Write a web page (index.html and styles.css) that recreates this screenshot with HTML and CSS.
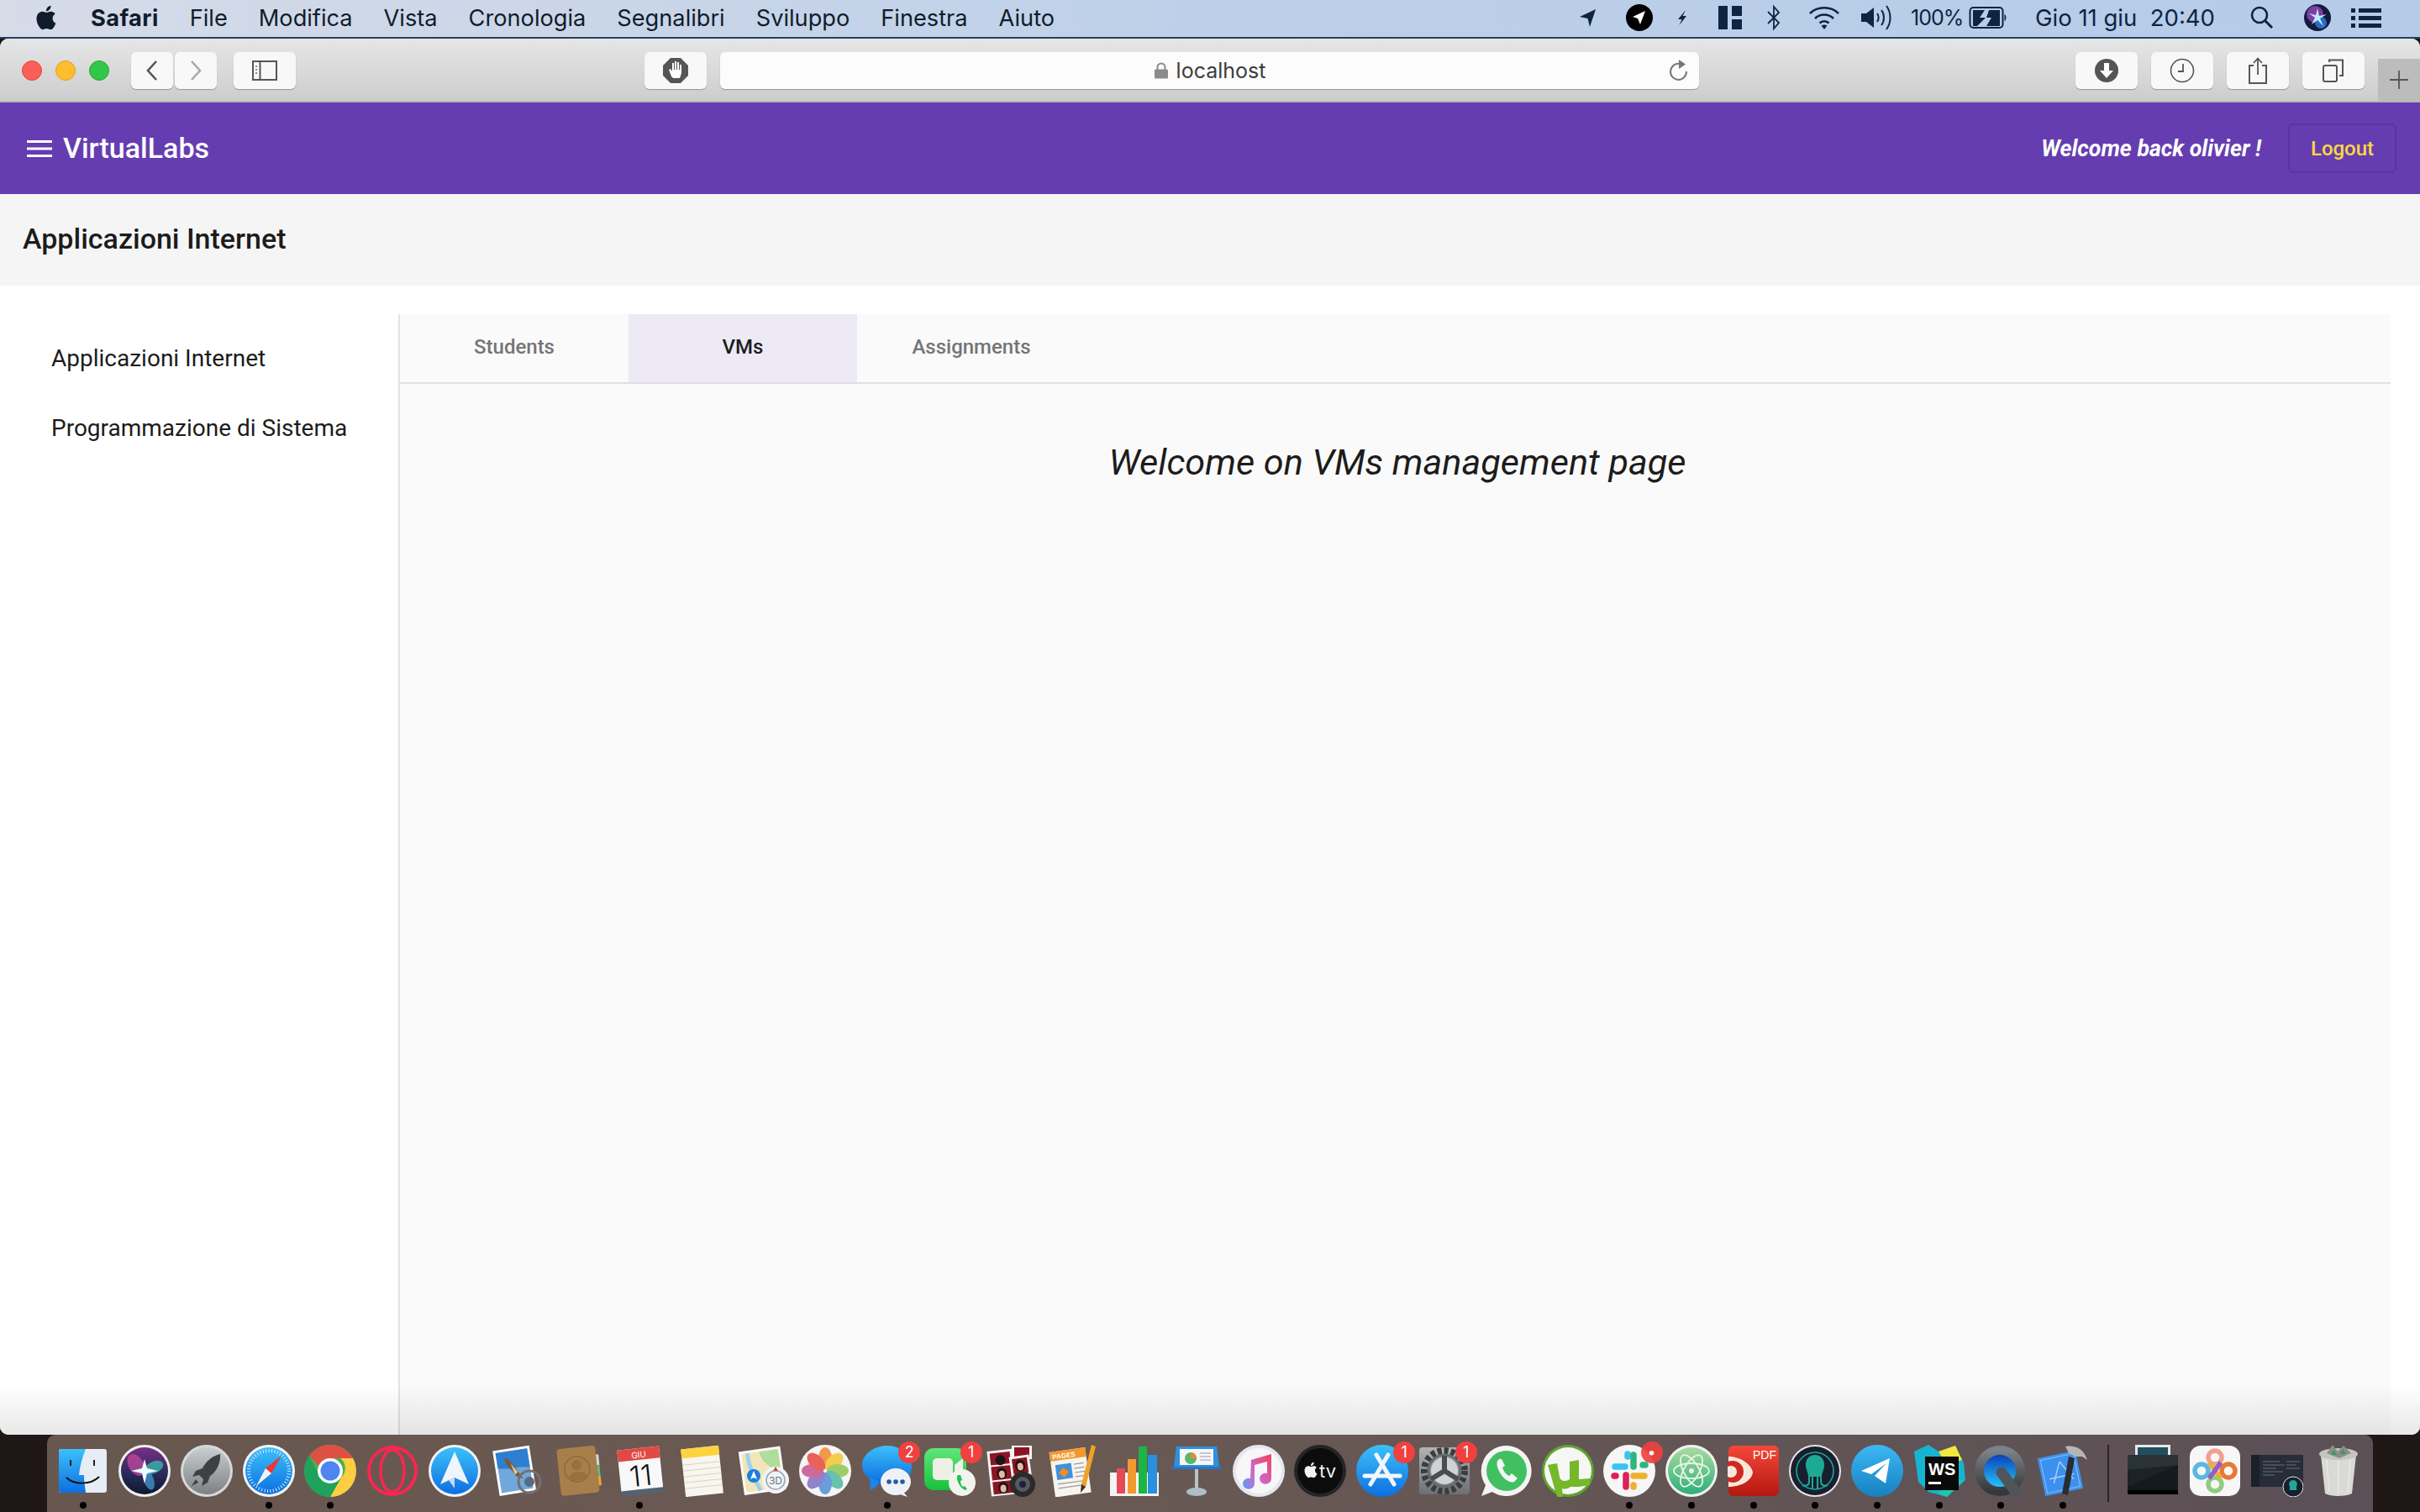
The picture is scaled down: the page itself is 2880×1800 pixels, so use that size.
FILE: index.html
```html
<!DOCTYPE html>
<html>
<head>
<meta charset="UTF-8">
<title>VirtualLabs</title>
<link rel="stylesheet" href="styles.css">
</head>
<body>
	<svg class="defs" width="0" height="0">
		<defs>
			<linearGradient id="gBlue" x1="0" y1="0" x2="0" y2="1"><stop offset="0" stop-color="#3cc0fb"/><stop offset="1" stop-color="#0d6fe0"/></linearGradient>
			<linearGradient id="gGrey" x1="0" y1="0" x2="0" y2="1"><stop offset="0" stop-color="#c9cdd0"/><stop offset="1" stop-color="#7d8184"/></linearGradient>
			<linearGradient id="gGreen" x1="0" y1="0" x2="0" y2="1"><stop offset="0" stop-color="#5fe67a"/><stop offset="1" stop-color="#17c13b"/></linearGradient>
			<linearGradient id="gSiri" x1="0" y1="0" x2="0" y2="1"><stop offset="0" stop-color="#7a2f86"/><stop offset=".55" stop-color="#2a2a5c"/><stop offset="1" stop-color="#0d1a2c"/></linearGradient>
			<linearGradient id="gNote" x1="1" y1="0" x2="0" y2="1"><stop offset="0" stop-color="#f8405f"/><stop offset=".6" stop-color="#c86ad0"/><stop offset="1" stop-color="#5aa0f0"/></linearGradient>
			<linearGradient id="gAtom" x1="0" y1="0" x2="0" y2="1"><stop offset="0" stop-color="#a8dba0"/><stop offset="1" stop-color="#2fae7c"/></linearGradient>
			<linearGradient id="gTele" x1="0" y1="0" x2="0" y2="1"><stop offset="0" stop-color="#3db8f5"/><stop offset="1" stop-color="#1680c0"/></linearGradient>
			<linearGradient id="gPdf" x1="0" y1="0" x2="0" y2="1"><stop offset="0" stop-color="#f4483a"/><stop offset="1" stop-color="#b5170f"/></linearGradient>
			<linearGradient id="gQt" x1="0" y1="0" x2="0" y2="1"><stop offset="0" stop-color="#0a3fb8"/><stop offset="1" stop-color="#28c4fa"/></linearGradient>
			<linearGradient id="gQtRing" x1="0" y1="0" x2="0" y2="1"><stop offset="0" stop-color="#7c8287"/><stop offset="1" stop-color="#34383c"/></linearGradient>
			<linearGradient id="gPrefs" x1="0" y1="0" x2="0" y2="1"><stop offset="0" stop-color="#b0b3b6"/><stop offset="1" stop-color="#6c7074"/></linearGradient>
		</defs>
	</svg>

	<div class="menubar">
		<div class="menu-left">
			<svg class="apple" viewBox="0 0 24 24"><path d="M18.71 19.5c-.83 1.24-1.71 2.45-3.05 2.47-1.34.03-1.77-.79-3.29-.79-1.53 0-2 .77-3.27.82-1.31.05-2.3-1.32-3.14-2.53C4.25 17 2.94 12.45 4.7 9.39c.87-1.52 2.43-2.48 4.12-2.51 1.28-.02 2.5.87 3.29.87.78 0 2.26-1.07 3.81-.91.65.03 2.47.26 3.64 1.98-.09.06-2.17 1.28-2.15 3.81.03 3.02 2.65 4.03 2.68 4.04-.03.07-.42 1.44-1.38 2.83M13 3.5c.73-.83 1.94-1.46 2.94-1.5.13 1.17-.34 2.35-1.04 3.19-.69.85-1.83 1.51-2.95 1.42-.15-1.15.41-2.35 1.05-3.11z"/></svg>
			<b>Safari</b>
			<span>File</span>
			<span>Modifica</span>
			<span>Vista</span>
			<span>Cronologia</span>
			<span>Segnalibri</span>
			<span>Sviluppo</span>
			<span>Finestra</span>
			<span>Aiuto</span>
		</div>
		<div class="menu-right">
			<svg class="st st-loc" viewBox="0 0 24 24"><path d="M21 2 L14 23 L11.5 13 L2 11 Z" fill="#0f2440"/></svg>
			<svg class="st st-tg" viewBox="0 0 32 32"><circle cx="16" cy="16" r="16" fill="#000"/><path d="M23 8 L8 15 L14 17 L17 24 Z" fill="#fff"/></svg>
			<svg class="st st-bolt" viewBox="0 0 16 24"><path d="M12 3 L3 14 H7.5 L4.5 21 L13 10 H8.5 Z" fill="#0f2440"/></svg>
			<svg class="st st-mag" viewBox="0 0 28 28"><path d="M0 0H11V28H0ZM16 0H28V12H16ZM16 16H28V28H16Z" fill="#0f2440"/></svg>
			<svg class="st st-bt" viewBox="0 0 20 32"><path d="M3 9 L16 22 L10 29 V3 L16 10 L3 23" fill="none" stroke="#0f2440" stroke-width="1.8"/></svg>
			<svg class="st st-wifi" viewBox="0 0 40 32"><g fill="none" stroke="#0f2440" stroke-width="2.6"><path d="M3 11 C12 2 28 2 37 11"/><path d="M9 17 C15 11 25 11 31 17"/><path d="M14.5 22.5 C17.5 19.5 22.5 19.5 25.5 22.5"/></g><path d="M20 30 L16.5 25.5 C18.5 24 21.5 24 23.5 25.5 Z" fill="#0f2440"/></svg>
			<svg class="st st-vol" viewBox="0 0 40 32"><path d="M2 11H8L17 4V28L8 21H2Z" fill="#0f2440"/><g fill="none" stroke="#0f2440" stroke-width="2"><path d="M21 11C23 14 23 18 21 21"/><path d="M26 7C30 12 30 20 26 25"/><path d="M32 2C38 10 38 22 32 30"/></g></svg>
			<span class="st-pct">100%</span>
			<svg class="st st-bat" viewBox="0 0 46 30"><rect x="1.5" y="3" width="39" height="24" rx="4" fill="none" stroke="#0f2440" stroke-width="2"/><path d="M5 6H19L13 15H20L10 25H5ZM24 6H37V25H21L27 15H21Z" fill="#0f2440"/><path d="M42.5 11C45 12 45 18 42.5 19Z" fill="#0f2440"/></svg>
			<span class="st-date">Gio 11 giu&nbsp; 20:40</span>
			<svg class="st st-search" viewBox="0 0 30 30"><circle cx="12" cy="12" r="9" fill="none" stroke="#0f2440" stroke-width="2.6"/><path d="M18.5 18.5 L27 27" stroke="#0f2440" stroke-width="3"/></svg>
			<svg class="st st-siri" viewBox="0 0 32 32"><circle cx="16" cy="16" r="16" fill="#141a3a"/><circle cx="13" cy="12" r="10" fill="#7a3fa0"/><circle cx="20" cy="22" r="7" fill="#2a6cc0"/><path d="M16 5 L18 14 L27 12 L19 17 L23 26 L16 19 L9 24 L13 16 L6 11 L14 13 Z" fill="#bfe8ff"/></svg>
			<svg class="st st-list" viewBox="0 0 36 24"><path d="M0 1H5V6H0ZM9 1H36V6H9ZM0 10H5V15H0ZM9 10H36V15H9ZM0 19H5V24H0ZM9 19H36V24H9Z" fill="#0f2440"/></svg>
		</div>
	</div>

	<div class="window">
		<div class="toolbar">
			<div class="lights">
				<i class="light red"></i>
				<i class="light yellow"></i>
				<i class="light green"></i>
			</div>
			<div class="nav-btns">
				<div class="btn btn-nav"><svg width="16" height="26" viewBox="0 0 16 26"><path d="M13 2 L3 13 L13 24" fill="none" stroke="#555" stroke-width="2.6"/></svg></div>
				<div class="btn btn-nav"><svg width="16" height="26" viewBox="0 0 16 26"><path d="M3 2 L13 13 L3 24" fill="none" stroke="#aaa" stroke-width="2.6"/></svg></div>
			</div>
			<div class="btn btn-side"><svg width="30" height="24" viewBox="0 0 30 24"><rect x="1" y="1" width="28" height="22" fill="none" stroke="#555" stroke-width="2"/><path d="M9.5 1V23" stroke="#555" stroke-width="2"/><path d="M5 6V17" stroke="#888" stroke-width="2" stroke-dasharray="2 2"/></svg></div>
			<div class="btn btn-hand"><svg width="32" height="32" viewBox="0 0 32 32"><path d="M10 1H22L31 10V22L22 31H10L1 22V10Z" fill="#555"/><path d="M11 23 L8 15 L10 14 L12 17 V7 H14 V15 H15 V5 H17 V15 H18 V6 H20 V15 H21 V9 H23 V19 L21 25 H13 Z" fill="#fff"/></svg></div>
			<div class="urlbar">
				<div class="url-text">
					<svg width="18" height="20" viewBox="0 0 18 20"><path d="M4.5 9V6a4.500 4.500 0 0 1 9 0v3" fill="none" stroke="#8b8b8b" stroke-width="2"/><rect x="1" y="8.500" width="16" height="11" rx="1.500" fill="#8b8b8b"/></svg>
					<span>localhost</span>
				</div>
				<svg class="reload" width="24" height="28" viewBox="0 0 24 28"><path d="M13 6 A9.500 9.500 0 1 0 21 15" fill="none" stroke="#777" stroke-width="2"/><path d="M12 1 L20 6.500 L12 12 Z" fill="#777"/></svg>
			</div>
			<div class="tool-right">
				<div class="btn btn-tool"><svg width="30" height="30" viewBox="0 0 30 30"><circle cx="15" cy="15" r="14" fill="#555"/><path d="M12 6H18V15H23L15 24L7 15H12Z" fill="#fff"/></svg></div>
				<div class="btn btn-tool"><svg width="30" height="30" viewBox="0 0 30 30"><circle cx="15" cy="15" r="13.500" fill="none" stroke="#555" stroke-width="1.600"/><path d="M16 7V16H10" fill="none" stroke="#555" stroke-width="1.800"/></svg></div>
				<div class="btn btn-tool"><svg width="24" height="32" viewBox="0 0 24 32"><path d="M7 10H2V31H22V10H17" fill="none" stroke="#555" stroke-width="2"/><path d="M12 21V2M7 7L12 1.500L17 7" fill="none" stroke="#555" stroke-width="1.800"/></svg></div>
				<div class="btn btn-tool"><svg width="26" height="28" viewBox="0 0 26 28"><rect x="1" y="8" width="16" height="19" rx="2" fill="none" stroke="#555" stroke-width="2"/><path d="M8 4V1.500H24V20H20" fill="none" stroke="#555" stroke-width="2"/></svg></div>
			</div>
			<div class="new-tab"><svg width="22" height="22" viewBox="0 0 22 22"><path d="M11 0V22M0 11H22" stroke="#555" stroke-width="1.800"/></svg></div>
		</div>

		<header class="appbar">
			<div class="brand">
				<svg class="hamburger" width="30" height="20" viewBox="0 0 30 20"><path d="M0 0H30V3H0ZM0 8.500H30V11.500H0ZM0 17H30V20H0Z" fill="#fff"/></svg>
				<span class="brand-name">VirtualLabs</span>
			</div>
			<div class="user-area">
				<span class="welcome">Welcome back olivier !</span>
				<button class="logout">Logout</button>
			</div>
		</header>

		<div class="subbar">Applicazioni Internet</div>

		<main class="main">
			<nav class="sidebar">
				<a class="course">Applicazioni Internet</a>
				<a class="course">Programmazione di Sistema</a>
			</nav>
			<section class="content">
				<div class="tabs">
					<div class="tab">Students</div>
					<div class="tab tab-active">VMs</div>
					<div class="tab">Assignments</div>
				</div>
				<h2 class="page-title">Welcome on VMs management page</h2>
			</section>
		</main>
	</div>

	<div class="dock-row">
		<div class="dock">
			<!-- finder -->
			<div class="item"><svg class="icon" viewBox="0 0 62 62"><rect x="2" y="5" width="57" height="52" rx="3" fill="#e6edf4"/><path d="M5 5H34C30 15 27 25 26 36H32C32 43 33 50 34 57H5A3 3 0 0 1 2 54V8A3 3 0 0 1 5 5Z" fill="url(#gBlue)"/><path d="M16 18V25M44 18V25" stroke="#222" stroke-width="2"/><path d="M11 39C20 48 40 48 50 38" fill="none" stroke="#111" stroke-width="2"/></svg><i class="dot"></i></div>
			<!-- siri -->
			<div class="item"><svg class="icon" viewBox="0 0 62 62"><circle cx="31" cy="31" r="31" fill="#eee"/><circle cx="31" cy="31" r="28" fill="url(#gSiri)"/><ellipse cx="21" cy="24" rx="9" ry="14" fill="#c04a9c" opacity=".75" transform="rotate(-30 21 24)"/><ellipse cx="42" cy="27" rx="12" ry="7" fill="#38c0b0" opacity=".75" transform="rotate(-25 42 27)"/><ellipse cx="36" cy="42" rx="6" ry="12" fill="#4aa0e0" opacity=".7" transform="rotate(-20 36 42)"/><path d="M31 17L34 28L47 31L34 34L31 46L28 34L15 31L28 28Z" fill="#eafcff"/></svg></div>
			<!-- launchpad -->
			<div class="item"><svg class="icon" viewBox="0 0 62 62"><circle cx="31" cy="31" r="31" fill="#d6d8da"/><circle cx="31" cy="31" r="28" fill="url(#gGrey)"/><path d="M47 11C38 13 30 20 26 28L18 31L14 38L22 36L27 41L25 49L32 45L35 37C43 32 48 21 47 11Z" fill="#3e4143"/><path d="M18 41L13 49L21 45Z" fill="#3e4143"/></svg></div>
			<!-- safari -->
			<div class="item"><svg class="icon" viewBox="0 0 62 62"><circle cx="31" cy="31" r="31" fill="#f4f4f4"/><circle cx="31" cy="31" r="28" fill="url(#gBlue)"/><circle cx="31" cy="31" r="24" fill="none" stroke="#d5ebff" stroke-width="4" stroke-dasharray="1 2.500"/><path d="M46 13L34 34L27 28Z" fill="#f0342c"/><path d="M16 49L27 28L34 34Z" fill="#f2f2f2"/></svg><i class="dot"></i></div>
			<!-- chrome -->
			<div class="item"><svg class="icon" viewBox="0 0 62 62"><circle cx="31" cy="31" r="31" fill="#4caf50"/><path d="M31 0A31 31 0 0 1 58 16H31A15 15 0 0 0 17 25L6 13A31 31 0 0 1 31 0Z" fill="#dd5144"/><path d="M58 16A31 31 0 0 1 31 62L44 39A15 15 0 0 0 43 16Z" fill="#ffcd40"/><path d="M31 62A31 31 0 0 1 6 13L19 39A15 15 0 0 0 44 39Z" fill="#1fa25c"/><circle cx="31" cy="31" r="15" fill="#fff"/><circle cx="31" cy="31" r="11.500" fill="#4e85f0"/></svg><i class="dot"></i></div>
			<!-- opera -->
			<div class="item"><svg class="icon" viewBox="0 0 62 62"><circle cx="31" cy="31" r="28" fill="none" stroke="#fb2650" stroke-width="4"/><ellipse cx="31" cy="31" rx="14" ry="25" fill="none" stroke="#fb2650" stroke-width="3.500"/></svg></div>
			<!-- spark -->
			<div class="item"><svg class="icon" viewBox="0 0 62 62"><circle cx="31" cy="31" r="31" fill="#f2f2f2"/><circle cx="31" cy="31" r="28" fill="url(#gBlue)"/><path d="M31 8L48 47L31 39L14 47Z" fill="#eef5fb"/><path d="M31 39V52L24 42Z" fill="#c8dcef"/></svg></div>
			<!-- mail -->
			<div class="item"><svg class="icon" viewBox="0 0 62 62"><g transform="rotate(-9 28 30)"><rect x="7" y="4" width="44" height="54" fill="#fff"/><rect x="10" y="7" width="38" height="48" fill="#6fa8dc"/><path d="M10 7H48V30C35 25 20 30 10 25Z" fill="#2f7fd0"/><path d="M20 14C25 16 27 22 30 26L38 42L30 38L26 30C22 26 19 20 20 14Z" fill="#7a5c3c"/><path d="M26 22L33 33L29 36Z" fill="#d8c4a4"/></g><circle cx="47" cy="44" r="13" fill="none" stroke="#77706c" stroke-width="3"/><circle cx="47" cy="44" r="6" fill="#5a6a80"/></svg></div>
			<!-- contacts -->
			<div class="item"><svg class="icon" viewBox="0 0 62 62"><g transform="rotate(-6 30 31)"><rect x="8" y="3" width="46" height="56" rx="4" fill="#a87e4a"/><rect x="54" y="14" width="3" height="13" fill="#d8d8d8"/><rect x="54" y="27" width="3" height="13" fill="#5fbf74"/><rect x="54" y="40" width="3" height="11" fill="#f0a830"/><circle cx="30" cy="29" r="15" fill="none" stroke="#8f6a3c" stroke-width="1.500"/><circle cx="30" cy="24" r="6" fill="#96703f"/><path d="M19 38C22 30 38 30 41 38C36 44 24 44 19 38Z" fill="#96703f"/></g></svg></div>
			<!-- calendar -->
			<div class="item"><svg class="icon" viewBox="0 0 62 62"><g transform="rotate(-6 31 31)"><rect x="7" y="5" width="50" height="55" fill="#566270"/><rect x="7" y="4" width="50" height="49" fill="#f8f8f8"/><rect x="7" y="4" width="50" height="14" fill="#e14a44"/><text x="32" y="15.500" class="cal-m">GIU</text><text x="32" y="49" class="cal-d">11</text></g></svg><i class="dot"></i></div>
			<!-- notes -->
			<div class="item"><svg class="icon" viewBox="0 0 62 62"><g transform="rotate(-6 31 31)"><rect x="9" y="3" width="45" height="57" fill="#f8f6ee"/><rect x="9" y="3" width="45" height="11" fill="#fdd33e"/><path d="M9 22H54M9 29H54M9 36H54M9 43H54M9 50H54" stroke="#d6d3c8" stroke-width="1"/></g></svg></div>
			<!-- maps -->
			<div class="item"><svg class="icon" viewBox="0 0 62 62"><g transform="rotate(-8 28 30)"><rect x="4" y="5" width="50" height="52" fill="#fafafa"/><rect x="7" y="8" width="44" height="46" fill="#f2e6b8"/><path d="M28 8H51V34C40 30 30 22 28 8Z" fill="#aedd9c"/><path d="M14 8C14 25 18 38 24 54" fill="none" stroke="#9fd0f0" stroke-width="5"/></g><circle cx="19" cy="37" r="8" fill="#1a7fe0"/><path d="M19 31L23 41L19 39L15 41Z" fill="#fff"/><circle cx="45" cy="42" r="16" fill="#f4f4f4"/><circle cx="45" cy="42" r="11" fill="none" stroke="#8fa8bc" stroke-width="1.500"/><path d="M45 26L48 31H42Z" fill="#e04030"/><text x="45" y="46.500" class="map-3d">3D</text></svg></div>
			<!-- photos -->
			<div class="item"><svg class="icon" viewBox="0 0 62 62"><circle cx="31" cy="31" r="31" fill="#f5f5f5"/><g opacity=".85"><ellipse cx="31" cy="16" rx="8" ry="13" fill="#f08a30"/><ellipse cx="31" cy="16" rx="8" ry="13" fill="#f5c530" transform="rotate(45 31 31)"/><ellipse cx="31" cy="16" rx="8" ry="13" fill="#90c850" transform="rotate(90 31 31)"/><ellipse cx="31" cy="16" rx="8" ry="13" fill="#50b8a0" transform="rotate(135 31 31)"/><ellipse cx="31" cy="16" rx="8" ry="13" fill="#5090d8" transform="rotate(180 31 31)"/><ellipse cx="31" cy="16" rx="8" ry="13" fill="#8070c0" transform="rotate(225 31 31)"/><ellipse cx="31" cy="16" rx="8" ry="13" fill="#c85090" transform="rotate(270 31 31)"/><ellipse cx="31" cy="16" rx="8" ry="13" fill="#e84840" transform="rotate(315 31 31)"/></g></svg></div>
			<!-- messages -->
			<div class="item"><svg class="icon" viewBox="0 0 62 62"><path d="M31 1C46 1 60 12 60 27C60 35 55 41 48 45H20C10 41 1 36 1 24C1 11 16 1 31 1Z" fill="url(#gBlue)"/><path d="M9 38C11 45 11 51 10 54C16 52 20 48 22 44Z" fill="#1a85ea"/><ellipse cx="41" cy="44" rx="18" ry="16" fill="#eef1f6"/><path d="M50 56L55 62L46 59Z" fill="#eef1f6"/><circle cx="33" cy="44" r="2.800" fill="#1d5ca8"/><circle cx="41" cy="44" r="2.800" fill="#1d5ca8"/><circle cx="49" cy="44" r="2.800" fill="#1d5ca8"/></svg><i class="dot"></i><b class="badge">2</b></div>
			<!-- facetime -->
			<div class="item"><svg class="icon" viewBox="0 0 62 62"><rect x="1" y="4" width="50" height="50" rx="11" fill="url(#gGreen)"/><rect x="11" y="16" width="24" height="26" rx="5" fill="#eef0e8"/><path d="M37 24L47 16V42L37 34Z" fill="#eef0e8"/><circle cx="46" cy="45" r="16" fill="#f2f3ef"/><path d="M41 36C39 38 40 43 43 48C46 53 50 55 52 53L49 49L47 50C45 48 44 46 44 43L46 42L44 36Z" fill="#22c04a"/></svg><b class="badge">1</b></div>
			<!-- photo booth -->
			<div class="item"><svg class="icon" viewBox="0 0 62 62"><g transform="rotate(-6 22 32)"><rect x="5" y="6" width="30" height="54" fill="#f5f5f5"/><rect x="8" y="9" width="24" height="14" fill="#8c1525"/><rect x="8" y="25" width="24" height="16" fill="#8c1525"/><rect x="8" y="43" width="24" height="15" fill="#8c1525"/><ellipse cx="20" cy="18" rx="6" ry="6" fill="#1e1414"/><ellipse cx="20" cy="34" rx="6" ry="7" fill="#1e1414"/><ellipse cx="20" cy="51" rx="6" ry="7" fill="#1e1414"/><ellipse cx="20" cy="35" rx="3.500" ry="4.500" fill="#e8b8a0"/><ellipse cx="20" cy="52" rx="3.500" ry="4.500" fill="#e8b8a0"/></g><rect x="32" y="1" width="24" height="16" fill="#f5f5f5"/><rect x="35" y="3" width="18" height="12" fill="#8c1525"/><g transform="rotate(-8 42 24)"><rect x="30" y="13" width="24" height="24" fill="#f5f5f5"/><rect x="33" y="16" width="18" height="18" fill="#8c1525"/><ellipse cx="42" cy="25" rx="6" ry="7" fill="#1e1414"/><ellipse cx="42" cy="26" rx="3.500" ry="4.500" fill="#e8b8a0"/></g><circle cx="45" cy="47" r="15" fill="#2a2a2c"/><circle cx="45" cy="47" r="9" fill="#555a60"/><circle cx="45" cy="47" r="4" fill="#20203c"/></svg></div>
			<!-- pages -->
			<div class="item"><svg class="icon" viewBox="0 0 62 62"><g transform="rotate(-8 26 32)"><rect x="6" y="6" width="43" height="54" fill="#f6f4ee"/><path d="M6 6H49V17H6Z" fill="#f5972c"/><text x="9" y="15" class="pages-t">PAGES</text><rect x="11" y="22" width="19" height="18" fill="#3f92d8"/><path d="M20 26L26 32L20 38L14 32Z" fill="#f58a28"/><path d="M33 24H45M33 29H45M33 34H45M33 39H45M11 45H45M11 50H45" stroke="#9a9a9a" stroke-width="1.200"/></g><path d="M53 0L58 2L46 50L40 57L41 47Z" fill="#f2a028"/><path d="M41 47L46 50L40 57Z" fill="#333"/></svg></div>
			<!-- numbers -->
			<div class="item"><svg class="icon" viewBox="0 0 62 62"><rect x="2" y="33" width="58" height="28" fill="#f4f4f4"/><rect x="10" y="28" width="10" height="30" fill="#e64a58"/><rect x="23" y="17" width="10" height="41" fill="#f29a30"/><rect x="36" y="2" width="10" height="56" fill="#1cb644"/><rect x="47" y="12" width="11" height="46" fill="#2a90e0"/></svg></div>
			<!-- keynote -->
			<div class="item"><svg class="icon" viewBox="0 0 62 62"><path d="M7 2H55L58 26H4Z" fill="#2f90e0"/><rect x="11" y="5" width="40" height="19" fill="#f4f6f8"/><circle cx="24" cy="16" r="7" fill="#58b868"/><path d="M24 16V9A7 7 0 0 1 31 16Z" fill="#e8883c"/><path d="M35 10H48M35 14H48M35 18H48" stroke="#99a" stroke-width="1.200"/><rect x="1" y="26" width="60" height="3" fill="#2a75c0"/><rect x="29" y="29" width="4" height="25" fill="#b8c4cc"/><ellipse cx="31" cy="56" rx="12" ry="5" fill="#aebdc8"/></svg></div>
			<!-- music -->
			<div class="item"><svg class="icon" viewBox="0 0 62 62"><circle cx="31" cy="31" r="31" fill="#e6e7ec"/><circle cx="31" cy="31" r="27" fill="#f7f7f9"/><path d="M22 18L46 11V40A7 6.500 0 1 1 41 34V20L26 24V46A7 6.500 0 1 1 21 40Z" fill="url(#gNote)"/></svg></div>
			<!-- tv -->
			<div class="item"><svg class="icon" viewBox="0 0 62 62"><circle cx="31" cy="31" r="31" fill="#252525"/><circle cx="31" cy="31" r="27" fill="#0c0c0c"/><svg x="9" y="19" width="22" height="22" viewBox="0 0 24 24"><path fill="#f2f2f2" d="M18.71 19.5c-.83 1.24-1.71 2.45-3.05 2.47-1.34.03-1.77-.79-3.29-.79-1.53 0-2 .77-3.27.82-1.31.05-2.3-1.32-3.14-2.53C4.25 17 2.94 12.45 4.7 9.39c.87-1.52 2.43-2.48 4.12-2.51 1.28-.02 2.5.87 3.29.87.78 0 2.26-1.07 3.81-.91.65.03 2.47.26 3.64 1.98-.09.06-2.17 1.28-2.15 3.81.03 3.02 2.65 4.03 2.68 4.04-.03.07-.42 1.44-1.38 2.83M13 3.500c.73-.83 1.94-1.46 2.94-1.5.13 1.17-.34 2.35-1.04 3.19-.69.85-1.83 1.51-2.95 1.42-.15-1.15.41-2.35 1.05-3.11z"/></svg><text x="30" y="39" class="tv-t">tv</text></svg></div>
			<!-- app store -->
			<div class="item"><svg class="icon" viewBox="0 0 62 62"><circle cx="31" cy="31" r="31" fill="url(#gBlue)"/><g fill="none" stroke="#f2f6fb" stroke-width="5" stroke-linecap="round"><path d="M24 12L45 47"/><path d="M38 12L17 47"/><path d="M10 37H52"/></g></svg><b class="badge">1</b></div>
			<!-- system preferences -->
			<div class="item"><svg class="icon" viewBox="0 0 62 62"><rect x="1" y="3" width="60" height="56" rx="4" fill="url(#gPrefs)"/><circle cx="31" cy="31" r="24" fill="none" stroke="#3a3c3e" stroke-width="8" stroke-dasharray="5 3"/><circle cx="31" cy="31" r="19" fill="none" stroke="#6a6c6e" stroke-width="3"/><circle cx="31" cy="31" r="16" fill="#d0d2d4"/><path d="M31 31V13M31 31L15 41M31 31L47 41" stroke="#4a4c4e" stroke-width="6"/></svg><b class="badge">1</b></div>
			<!-- whatsapp -->
			<div class="item"><svg class="icon" viewBox="0 0 62 62"><path d="M31 1A30 30 0 1 1 15 56L2 61L7 48A30 30 0 0 1 31 1Z" fill="#f4f4f4"/><circle cx="32" cy="31" r="24" fill="#41c062"/><path d="M23 17C20 19 19 24 24 33C29 42 37 46 41 44L45 40L38 34L35 37C32 36 28 31 27 27L30 25L26 17Z" fill="#f6f6f6"/></svg></div>
			<!-- utorrent -->
			<div class="item"><svg class="icon" viewBox="0 0 62 62"><circle cx="31" cy="31" r="31" fill="#5ea52e"/><circle cx="31" cy="31" r="28" fill="#f6f6f4"/><path d="M7 24L18 22L21 38C22 44 29 44 33 41V20L44 18V41L57 40V48L44 50L34 50C30 53 26 53 24 52L25 62H18Z" fill="#76b82a"/></svg></div>
			<!-- slack -->
			<div class="item"><svg class="icon" viewBox="0 0 62 62"><circle cx="31" cy="31" r="31" fill="#f6f6f6"/><g stroke-width="7.500" stroke-linecap="round" fill="none"><path d="M14 26H26" stroke="#36c5f0"/><path d="M29 11V14" stroke="#36c5f0"/><path d="M36 12V26" stroke="#2eb67d"/><path d="M47 24H50" stroke="#2eb67d"/><path d="M36 37H49" stroke="#ecb22e"/><path d="M36 50V48" stroke="#ecb22e"/><path d="M27 36V50" stroke="#e01e5a"/><path d="M13 37H15" stroke="#e01e5a"/></g></svg><i class="dot"></i><b class="badge badge-mini">•</b></div>
			<!-- atom -->
			<div class="item"><svg class="icon" viewBox="0 0 62 62"><circle cx="31" cy="31" r="31" fill="#f2f2f2"/><circle cx="31" cy="31" r="28" fill="url(#gAtom)"/><g fill="none" stroke="#e8f6e6" stroke-width="1.800"><ellipse cx="31" cy="31" rx="21" ry="9"/><ellipse cx="31" cy="31" rx="21" ry="9" transform="rotate(60 31 31)"/><ellipse cx="31" cy="31" rx="21" ry="9" transform="rotate(120 31 31)"/></g><circle cx="31" cy="31" r="3" fill="#e8f6e6"/></svg><i class="dot"></i></div>
			<!-- pdf expert -->
			<div class="item"><svg class="icon" viewBox="0 0 62 62"><rect x="1" y="1" width="60" height="60" rx="6" fill="url(#gPdf)"/><path d="M1 14C14 14 28 22 30 33C28 44 14 50 1 50Z" fill="#f8e8dc"/><circle cx="6" cy="32" r="13" fill="#d02a20"/><circle cx="4" cy="32" r="7" fill="#f8e8dc"/><text x="58" y="17" class="pdf-t">PDF</text></svg><i class="dot"></i></div>
			<!-- gitkraken -->
			<div class="item"><svg class="icon" viewBox="0 0 62 62"><circle cx="31" cy="31" r="31" fill="#e4e6e8"/><circle cx="31" cy="31" r="29" fill="#182030"/><circle cx="31" cy="31" r="22" fill="none" stroke="#1ea896" stroke-width="1.500"/><path d="M31 12C38 12 43 18 42 26C41 31 39 34 39 38H23C23 34 21 31 20 26C19 18 24 12 31 12Z" fill="#1ea896"/><g fill="none" stroke="#1ea896" stroke-width="2"><path d="M24 38V44C24 48 20 50 16 48"/><path d="M28 38V52"/><path d="M34 38V52"/><path d="M38 38V44C38 48 42 50 46 48"/></g></svg><i class="dot"></i></div>
			<!-- telegram -->
			<div class="item"><svg class="icon" viewBox="0 0 62 62"><circle cx="31" cy="31" r="31" fill="url(#gTele)"/><path d="M46 16L12 31L24 35L42 22L28 37L41 46Z" fill="#fff"/></svg><i class="dot"></i></div>
			<!-- webstorm -->
			<div class="item"><svg class="icon" viewBox="0 0 62 62"><path d="M1 8L18 0L30 8L50 1L60 22L62 42L40 62L18 56L6 44Z" fill="#16b4d0"/><path d="M30 8L50 1L58 18L40 24Z" fill="#f4e83c"/><path d="M46 40L60 42L40 62L30 58Z" fill="#1cc8a8"/><rect x="14" y="14" width="40" height="40" fill="#0a0a0a"/><text x="18" y="36" class="ws-t">WS</text><rect x="18" y="44" width="15" height="3" fill="#fff"/></svg><i class="dot"></i></div>
			<!-- quicktime -->
			<div class="item"><svg class="icon" viewBox="0 0 62 62"><circle cx="30" cy="31" r="20" fill="url(#gQt)"/><circle cx="30" cy="31" r="24.500" fill="none" stroke="url(#gQtRing)" stroke-width="11"/><path d="M32 33L51 59" stroke="#50555a" stroke-width="13" stroke-linecap="round"/></svg><i class="dot"></i></div>
			<!-- xcode -->
			<div class="item"><svg class="icon" viewBox="0 0 62 62"><g transform="rotate(-12 28 34)"><rect x="5" y="11" width="46" height="46" fill="#3c90ee"/><rect x="8" y="14" width="40" height="40" fill="none" stroke="#8fc4f6" stroke-width="1"/><path d="M18 44L30 20M30 20L42 44M14 38H44" fill="none" stroke="#a8d2f8" stroke-width="1.500"/></g><path d="M38 14L45 16L37 60L30 58Z" fill="#2a2c30"/><path d="M34 2C44 0 56 4 60 18L54 14L46 14L38 10Z" fill="#b4b6b8"/></svg><i class="dot"></i></div>

			<i class="dock-sep"></i>

			<!-- stack -->
			<div class="item"><svg class="icon" viewBox="0 0 62 62"><rect x="10" y="0" width="42" height="12" fill="#e8e8e8"/><rect x="13" y="3" width="36" height="10" fill="#205060"/><rect x="1" y="12" width="60" height="47" fill="#1b2228"/><path d="M1 12H61V24L1 30Z" fill="#2a3238"/><path d="M1 59V50L61 24V59Z" fill="#141a1e"/><rect x="1" y="54" width="60" height="5" fill="#000"/></svg></div>
			<!-- knot app -->
			<div class="item"><svg class="icon" viewBox="0 0 62 62"><rect x="1" y="1" width="60" height="60" rx="13" fill="#f7f7f7"/><g fill="none" stroke-width="5.500"><circle cx="31" cy="15" r="8" stroke="#f0a090"/><circle cx="15" cy="31" r="8" stroke="#58b8e0"/><circle cx="47" cy="31" r="8" stroke="#e87838"/><circle cx="31" cy="47" r="8" stroke="#90cc80"/><path d="M24 21L38 40" stroke="#e8b040"/><path d="M38 21L24 40" stroke="#9060c0"/></g></svg></div>
			<!-- screenshot -->
			<div class="item"><svg class="icon" viewBox="0 0 62 62"><rect x="0" y="12" width="62" height="38" fill="#262c38"/><rect x="0" y="12" width="10" height="38" fill="#1c2028"/><path d="M14 20H34M14 24H40M14 28H30M14 32H38M14 36H28M42 20H58M42 24H54M42 28H58" stroke="#68707c" stroke-width="1.200"/><circle cx="50" cy="50" r="12" fill="#182030" stroke="#e4e6e8" stroke-width="1"/><path d="M50 42C54 42 56 46 54 50V54H46V50C44 46 46 42 50 42Z" fill="#1ea896"/></svg></div>
			<!-- trash -->
			<div class="item"><svg class="icon" viewBox="0 0 62 62"><path d="M10 12H52L47 58C40 62 22 62 15 58Z" fill="#d9d9d6"/><ellipse cx="31" cy="11" rx="23" ry="7" fill="#c4c4c0"/><path d="M17 10L24 0L30 8L37 1L46 10L32 16Z" fill="#8c8c8a"/><path d="M25 6L29 12H22ZM36 5L40 11H33Z" fill="#3a9a5c"/><path d="M17 18L20 56M31 18V58M45 18L42 56" stroke="#e8e8e6" stroke-width="1.500"/></svg></div>
		</div>
	</div>
</body>
</html>
```

FILE: styles.css
```css
* {
	box-sizing: border-box;
}

html, body {
	margin: 0;
	padding: 0;
}

body {
	width: 2880px;
	height: 1800px;
	overflow: hidden;
	display: flex;
	flex-direction: column;
	background-color: #1e1715;
	font-family: Roboto, "Liberation Sans", sans-serif;
}

.defs {
	display: block;
	flex: none;
}

/* os menu bar */
.menubar {
	flex: none;
	height: 46px;
	display: flex;
	justify-content: space-between;
	align-items: center;
	padding-bottom: 2px;
	background: linear-gradient(90deg, #d6dbe8 0%, #bdd0e9 50%, #b5cbe8 100%);
	border-bottom: 2px solid #24415f;
	color: #101c2c;
	font-family: Inter, "Liberation Sans", sans-serif;
	font-size: 27.2px;
}

.menu-left {
	display: flex;
	align-items: center;
	gap: 37px;
	padding-left: 38px;
}

.menu-left b {
	font-weight: 700;
	letter-spacing: .4px;
}

.apple {
	width: 34px;
	height: 36px;
	fill: #101c2c;
	margin-right: -1px;
}

.menu-right {
	display: flex;
	align-items: center;
	padding-right: 46px;
	color: #0f2440;
	font-size: 25px;
}

.st {
	flex: none;
	display: block;
}

.st-loc { width: 24px; height: 24px; margin-right: 33px; }
.st-tg { width: 32px; height: 32px; margin-right: 27px; }
.st-bolt { width: 16px; height: 24px; margin-right: 35px; }
.st-mag { width: 28px; height: 28px; margin-right: 28px; }
.st-bt { width: 20px; height: 32px; margin-right: 30px; }
.st-wifi { width: 40px; height: 32px; margin-right: 22px; }
.st-vol { width: 40px; height: 32px; margin-right: 21px; }
.st-pct { width: 62px; margin-right: 7px; letter-spacing: -1px; }
.st-bat { width: 46px; height: 30px; margin-right: 33px; }
.st-date { width: 216px; margin-right: 39px; white-space: nowrap; font-size: 27.5px; }
.st-search { width: 30px; height: 30px; margin-right: 35px; }
.st-siri { width: 32px; height: 32px; margin-right: 24px; }
.st-list { width: 36px; height: 24px; }

/* browser window */
.window {
	position: relative;
	flex: none;
	height: 1662px;
	display: flex;
	flex-direction: column;
	overflow: hidden;
	background-color: #fff;
	border-radius: 10px;
}

.window::after {
	content: "";
	position: absolute;
	left: 0;
	right: 0;
	bottom: 0;
	height: 60px;
	background: linear-gradient(180deg, rgba(0, 0, 0, 0), rgba(0, 0, 0, .09));
}

.toolbar {
	flex: none;
	height: 76px;
	display: flex;
	align-items: flex-start;
	padding-top: 16px;
	background: linear-gradient(180deg, #e6e6e6 0%, #cdcdcd 100%);
	border-bottom: 2px solid #b4b4b4;
}

.lights {
	display: flex;
	gap: 16px;
	padding: 10px 0 0 26px;
}

.light {
	display: block;
	width: 24px;
	height: 24px;
	border-radius: 50%;
}

.red { background-color: #fc5f57; border: 1px solid #e0443e; }
.yellow { background-color: #fdbd2e; border: 1px solid #dea123; }
.green { background-color: #33c748; border: 1px solid #27aa35; }

.btn {
	display: flex;
	align-items: center;
	justify-content: center;
	height: 44px;
	background-color: #f8f8f8;
	border-radius: 6px;
	box-shadow: 0 1px 1px rgba(0, 0, 0, .28);
}

.nav-btns {
	display: flex;
	gap: 2px;
	margin-left: 26px;
}

.btn-nav {
	width: 50px;
}

.btn-side {
	width: 74px;
	margin-left: 20px;
}

.btn-hand {
	width: 74px;
	margin-left: 415px;
}

.urlbar {
	position: relative;
	width: 1165px;
	height: 44px;
	margin-left: 16px;
	display: flex;
	align-items: center;
	justify-content: center;
	background-color: #fcfcfc;
	border-radius: 6px;
	box-shadow: 0 1px 1px rgba(0, 0, 0, .28);
}

.url-text {
	display: flex;
	align-items: center;
	gap: 9px;
	font-family: Inter, "Liberation Sans", sans-serif;
	font-size: 25px;
	color: #3c3c3c;
}

.reload {
	position: absolute;
	right: 12px;
	top: 8px;
}

.tool-right {
	display: flex;
	gap: 16px;
	margin-left: 448px;
}

.btn-tool {
	width: 74px;
}

.new-tab {
	width: 50px;
	height: 50px;
	margin: 8px 0 0 16px;
	display: flex;
	align-items: center;
	justify-content: center;
	background-color: #bcbcbc;
}

/* app header */
.appbar {
	flex: none;
	height: 109px;
	display: flex;
	justify-content: space-between;
	align-items: center;
	padding: 0 28px 0 32px;
	background-color: #653db0;
	color: #fff;
}

.brand {
	display: flex;
	align-items: center;
	gap: 13px;
}

.hamburger {
	display: block;
}

.brand-name {
	font-size: 34px;
	font-weight: 500;
	margin-bottom: 2px;
}

.user-area {
	display: flex;
	align-items: center;
	gap: 32px;
}

.welcome {
	font-size: 26.7px;
	font-style: italic;
	font-weight: 700;
}

.logout {
	width: 129px;
	height: 59px;
	padding: 0;
	background: transparent;
	border: 2px solid #5c33a2;
	border-radius: 6px;
	color: #ffd740;
	font-family: inherit;
	font-size: 24px;
	font-weight: 500;
}

.subbar {
	flex: none;
	height: 109px;
	display: flex;
	align-items: center;
	padding: 0 0 3px 27px;
	background-color: #f5f5f5;
	color: #1c1c1c;
	font-size: 34px;
	font-weight: 500;
}

.main {
	flex: 1;
	display: flex;
	padding: 34px 35px 0 0;
	background-color: #fff;
}

.sidebar {
	flex: none;
	width: 476px;
	padding: 11px 0 0 61px;
	border-right: 2px solid #e2e2e2;
	color: #1c1c1c;
	font-size: 28px;
}

.course {
	display: block;
	height: 83px;
	line-height: 83px;
	white-space: nowrap;
}

.content {
	flex: 1;
	background-color: #fafafa;
}

.tabs {
	display: flex;
	height: 83px;
	border-bottom: 2px solid #e0e0e0;
}

.tab {
	width: 272px;
	display: flex;
	align-items: center;
	justify-content: center;
	padding-bottom: 3px;
	color: #757575;
	font-size: 24px;
	font-weight: 500;
}

.tab-active {
	background-color: #ede9f5;
	color: #1c1c1c;
}

.page-title {
	margin: 68px 0 0;
	padding-left: 5px;
	text-align: center;
	color: #1c1c1c;
	font-size: 43.2px;
	font-style: italic;
	font-weight: 400;
}

/* os dock */
.dock-row {
	flex: none;
	height: 92px;
	padding-left: 56px;
}

.dock {
	width: 2768px;
	height: 92px;
	display: flex;
	padding-left: 6px;
	background: linear-gradient(90deg, #67574f 0%, #6a5a53 40%, #5b5056 100%);
	border-radius: 10px 10px 0 0;
}

.item {
	position: relative;
	flex: none;
	width: 73.64px;
	display: flex;
	flex-direction: column;
	align-items: center;
	padding-top: 12px;
}

.icon {
	flex: none;
	display: block;
	width: 62px;
	height: 62px;
}

.dot {
	display: block;
	width: 8px;
	height: 8px;
	margin-top: 6px;
	border-radius: 50%;
	background-color: #000;
}

.badge {
	position: absolute;
	left: 50px;
	top: 8px;
	width: 26px;
	height: 26px;
	line-height: 26px;
	border-radius: 50%;
	background-color: #f04040;
	color: #fff;
	text-align: center;
	font-family: Inter, "Liberation Sans", sans-serif;
	font-size: 18px;
	font-weight: 400;
}

.badge-mini {
	opacity: .9;
}

.dock-sep {
	flex: none;
	display: block;
	width: 2px;
	height: 68px;
	margin: 12px 16px 0 16px;
	background-color: #2a2424;
}

/* text inside dock icons */
.cal-m {
	text-anchor: middle;
	fill: #fff;
	font-family: Inter, "Liberation Sans", sans-serif;
	font-size: 10px;
}

.cal-d {
	text-anchor: middle;
	fill: #111;
	font-family: Inter, "Liberation Sans", sans-serif;
	font-size: 34px;
	font-weight: 300;
}

.map-3d {
	text-anchor: middle;
	fill: #5a7a90;
	font-family: Inter, "Liberation Sans", sans-serif;
	font-size: 12px;
}

.pages-t {
	fill: #fff;
	font-family: "Liberation Sans", sans-serif;
	font-size: 8px;
	font-weight: 700;
}

.tv-t {
	fill: #f2f2f2;
	font-family: Inter, "Liberation Sans", sans-serif;
	font-size: 22px;
}

.pdf-t {
	text-anchor: end;
	fill: #fff;
	font-family: "Liberation Sans", sans-serif;
	font-size: 14px;
}

.ws-t {
	fill: #fff;
	font-family: "Liberation Sans", sans-serif;
	font-size: 20px;
	font-weight: 700;
}
```
